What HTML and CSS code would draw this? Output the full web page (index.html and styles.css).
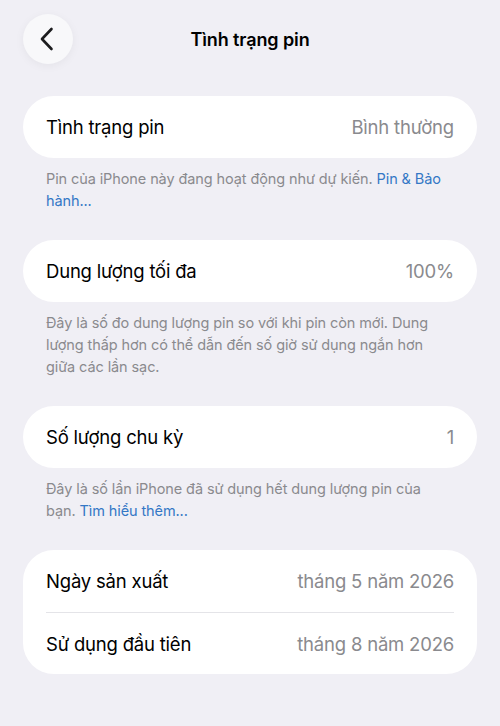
FILE: index.html
```html
<!DOCTYPE html>
<html lang="vi">
<head>
    <meta charset="utf-8">
    <title>Tình trạng pin</title>
    <link rel="stylesheet" href="styles.css">
</head>
<body>
    <div class="header">
        <button class="back" aria-label="Quay lại">
            <svg width="14" height="24" viewBox="0 0 14 24"><path d="M11.5 2 L2 12 L11.5 22" fill="none" stroke="#1c1c1e" stroke-width="2.6" stroke-linecap="round" stroke-linejoin="round"/></svg>
        </button>
        <h1>Tình trạng pin</h1>
    </div>

    <div class="group">
        <div class="row"><span class="label">Tình trạng pin</span><span class="value">Bình thường</span></div>
    </div>
    <p class="note">Pin của iPhone này đang hoạt động như dự kiến. <a href="#">Pin &amp; Bảo hành...</a></p>

    <div class="group">
        <div class="row"><span class="label">Dung lượng tối đa</span><span class="value">100%</span></div>
    </div>
    <p class="note">Đây là số đo dung lượng pin so với khi pin còn mới. Dung lượng thấp hơn có thể dẫn đến số giờ sử dụng ngắn hơn giữa các lần sạc.</p>

    <div class="group">
        <div class="row"><span class="label">Số lượng chu kỳ</span><span class="value">1</span></div>
    </div>
    <p class="note">Đây là số lần iPhone đã sử dụng hết dung lượng pin của bạn. <a href="#">Tìm hiểu thêm...</a></p>

    <div class="group">
        <div class="row"><span class="label">Ngày sản xuất</span><span class="value">tháng 5 năm 2026</span></div>
        <div class="row"><span class="label">Sử dụng đầu tiên</span><span class="value">tháng 8 năm 2026</span></div>
    </div>
</body>
</html>
```

FILE: styles.css
```css
body {
    margin: 0;
    padding: 14px 23px 0 23px;
    background-color: #f0eff5;
    font-family: Inter, "Noto Sans", sans-serif;
    color: #000;
}
.header {
    position: relative;
    height: 50px;
    display: flex;
    align-items: center;
    justify-content: center;
    margin-bottom: 32px;
}
.header h1 {
    margin: 0;
    font-size: 18px;
    font-weight: 600;
    letter-spacing: -0.1px;
}
.back {
    position: absolute;
    left: 0;
    top: 0;
    width: 50px;
    height: 50px;
    border-radius: 50%;
    border: none;
    background-color: #f8f8fa;
    box-shadow: 0 2px 10px rgba(0, 0, 0, 0.05);
    display: flex;
    align-items: center;
    justify-content: center;
    padding: 0 3px 0 0;
}
.group {
    background-color: #fff;
    border-radius: 31px;
    padding: 0 23px;
}
.row {
    height: 62px;
    display: flex;
    align-items: center;
    justify-content: space-between;
    font-size: 18.5px;
    letter-spacing: -0.2px;
}
.row + .row {
    border-top: 1px solid #e4e4e8;
    height: 61px;
}
.value {
    color: #8a8a8e;
}
.note {
    margin: 10px 0 28px 0;
    padding: 0 23px;
    font-size: 14.5px;
    line-height: 22px;
    color: #8a8a8e;
    letter-spacing: -0.1px;
}
.note a {
    color: #3478c6;
    text-decoration: none;
}
```
